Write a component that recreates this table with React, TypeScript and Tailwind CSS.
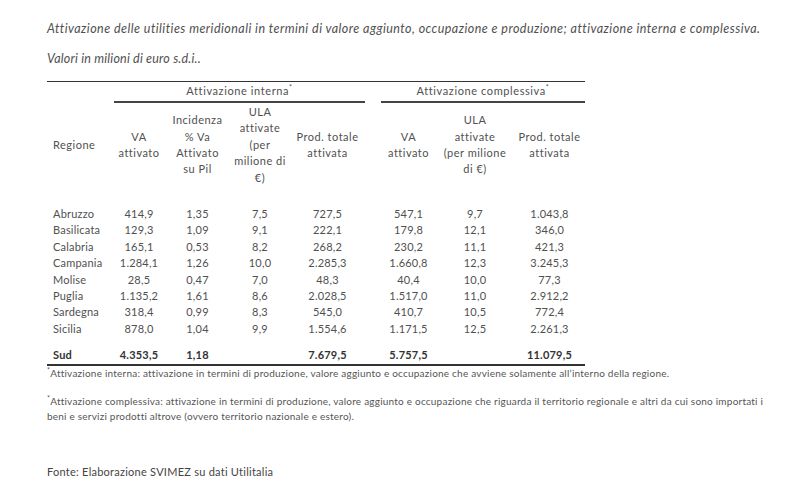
import React from 'react'

const rows = [
  ['Abruzzo', '414,9', '1,35', '7,5', '727,5', '547,1', '9,7', '1.043,8'],
  ['Basilicata', '129,3', '1,09', '9,1', '222,1', '179,8', '12,1', '346,0'],
  ['Calabria', '165,1', '0,53', '8,2', '268,2', '230,2', '11,1', '421,3'],
  ['Campania', '1.284,1', '1,26', '10,0', '2.285,3', '1.660,8', '12,3', '3.245,3'],
  ['Molise', '28,5', '0,47', '7,0', '48,3', '40,4', '10,0', '77,3'],
  ['Puglia', '1.135,2', '1,61', '8,6', '2.028,5', '1.517,0', '11,0', '2.912,2'],
  ['Sardegna', '318,4', '0,99', '8,3', '545,0', '410,7', '10,5', '772,4'],
  ['Sicilia', '878,0', '1,04', '9,9', '1.554,6', '1.171,5', '12,5', '2.261,3'],
]

const cols = 'grid grid-cols-[66px_52px_65px_60px_75px_16px_55px_78px_71px]'

function Row({ r, bold }: { r: string[]; bold?: boolean }) {
  return (
    <div className={`${cols} h-[16.4px] items-center leading-[16.4px] ${bold ? 'font-bold text-[#333]' : ''}`}>
      <div className="pl-[6px]">{r[0]}</div>
      <div className="text-center">{r[1]}</div>
      <div className="text-center">{r[2]}</div>
      <div className="text-center">{r[3]}</div>
      <div className="text-center">{r[4]}</div>
      <div />
      <div className="text-center">{r[5]}</div>
      <div className="text-center">{r[6]}</div>
      <div className="text-center">{r[7]}</div>
    </div>
  )
}

function Star() {
  return <span className="inline-block align-top text-[7px] leading-[8px]">*</span>
}

export default function App() {
  return (
    <div className="w-[810px] h-[484px] bg-white text-[#505050] font-['Lato','Liberation_Sans',sans-serif] pl-[47px] overflow-hidden">
      {/* Titolo */}
      <div className="pt-[21px] italic text-[12.5px] leading-[16px] tracking-[0.45px] text-[#505050] whitespace-nowrap">
        Attivazione delle utilities meridionali in termini di valore aggiunto, occupazione e produzione; attivazione interna e complessiva.
      </div>
      <div className="mt-[14px] italic text-[12.5px] leading-[16px] tracking-[0.2px] text-[#505050]">
        Valori in milioni di euro s.d.i..
      </div>

      {/* Tabella */}
      <div className="mt-[14px] w-[538px] text-[11px] tracking-[0.2px]">
        <div className="border-t-[1.5px] border-[#333]" />
        <div className={`${cols} h-[21px] tracking-[0.6px]`}>
          <div />
          <div className="col-span-4 ml-[1px] flex items-center justify-center border-b-2 border-[#444]">
            <span>
              Attivazione interna<Star />
            </span>
          </div>
          <div />
          <div className="col-span-3 flex items-center justify-center border-b-2 border-[#444]">
            <span>
              Attivazione complessiva<Star />
            </span>
          </div>
        </div>
        <div className={`${cols} h-[84px] items-center leading-[16.4px] tracking-[0.5px]`}>
          <div className="pl-[6px]">Regione</div>
          <div className="text-center">VA<br />attivato</div>
          <div className="text-center">Incidenza<br />% Va<br />Attivato<br />su Pil</div>
          <div className="text-center">ULA<br />attivate<br />(per<br />milione di<br />€)</div>
          <div className="text-center">Prod. totale<br />attivata</div>
          <div />
          <div className="text-center">VA<br />attivato</div>
          <div className="text-center">ULA<br />attivate<br />(per milione<br />di €)</div>
          <div className="text-center">Prod. totale<br />attivata</div>
        </div>
        <div className="mt-[19px]">
          {rows.map((r) => (
            <Row key={r[0]} r={r} />
          ))}
        </div>
        <div className="mt-[10px]">
          <Row r={['Sud', '4.353,5', '1,18', '', '7.679,5', '5.757,5', '', '11.079,5']} bold />
        </div>
        <div className="border-t-2 border-[#333]" />
      </div>

      {/* Note */}
      <div className="text-[10px] leading-[15px] tracking-[0.22px] text-[#555] whitespace-nowrap">
        <p>
          <Star />Attivazione interna: attivazione in termini di produzione, valore aggiunto e occupazione che avviene solamente all’interno della regione.
        </p>
        <p className="mt-[13px]">
          <Star />Attivazione complessiva: attivazione in termini di produzione, valore aggiunto e occupazione che riguarda il territorio regionale e altri da cui sono importati i
          <br />
          beni e servizi prodotti altrove (ovvero territorio nazionale e estero).
        </p>
      </div>
      <div className="mt-[40px] text-[11px] leading-[16px] tracking-[0.25px] text-[#444]">
        Fonte: Elaborazione SVIMEZ su dati Utilitalia
      </div>
    </div>
  )
}
